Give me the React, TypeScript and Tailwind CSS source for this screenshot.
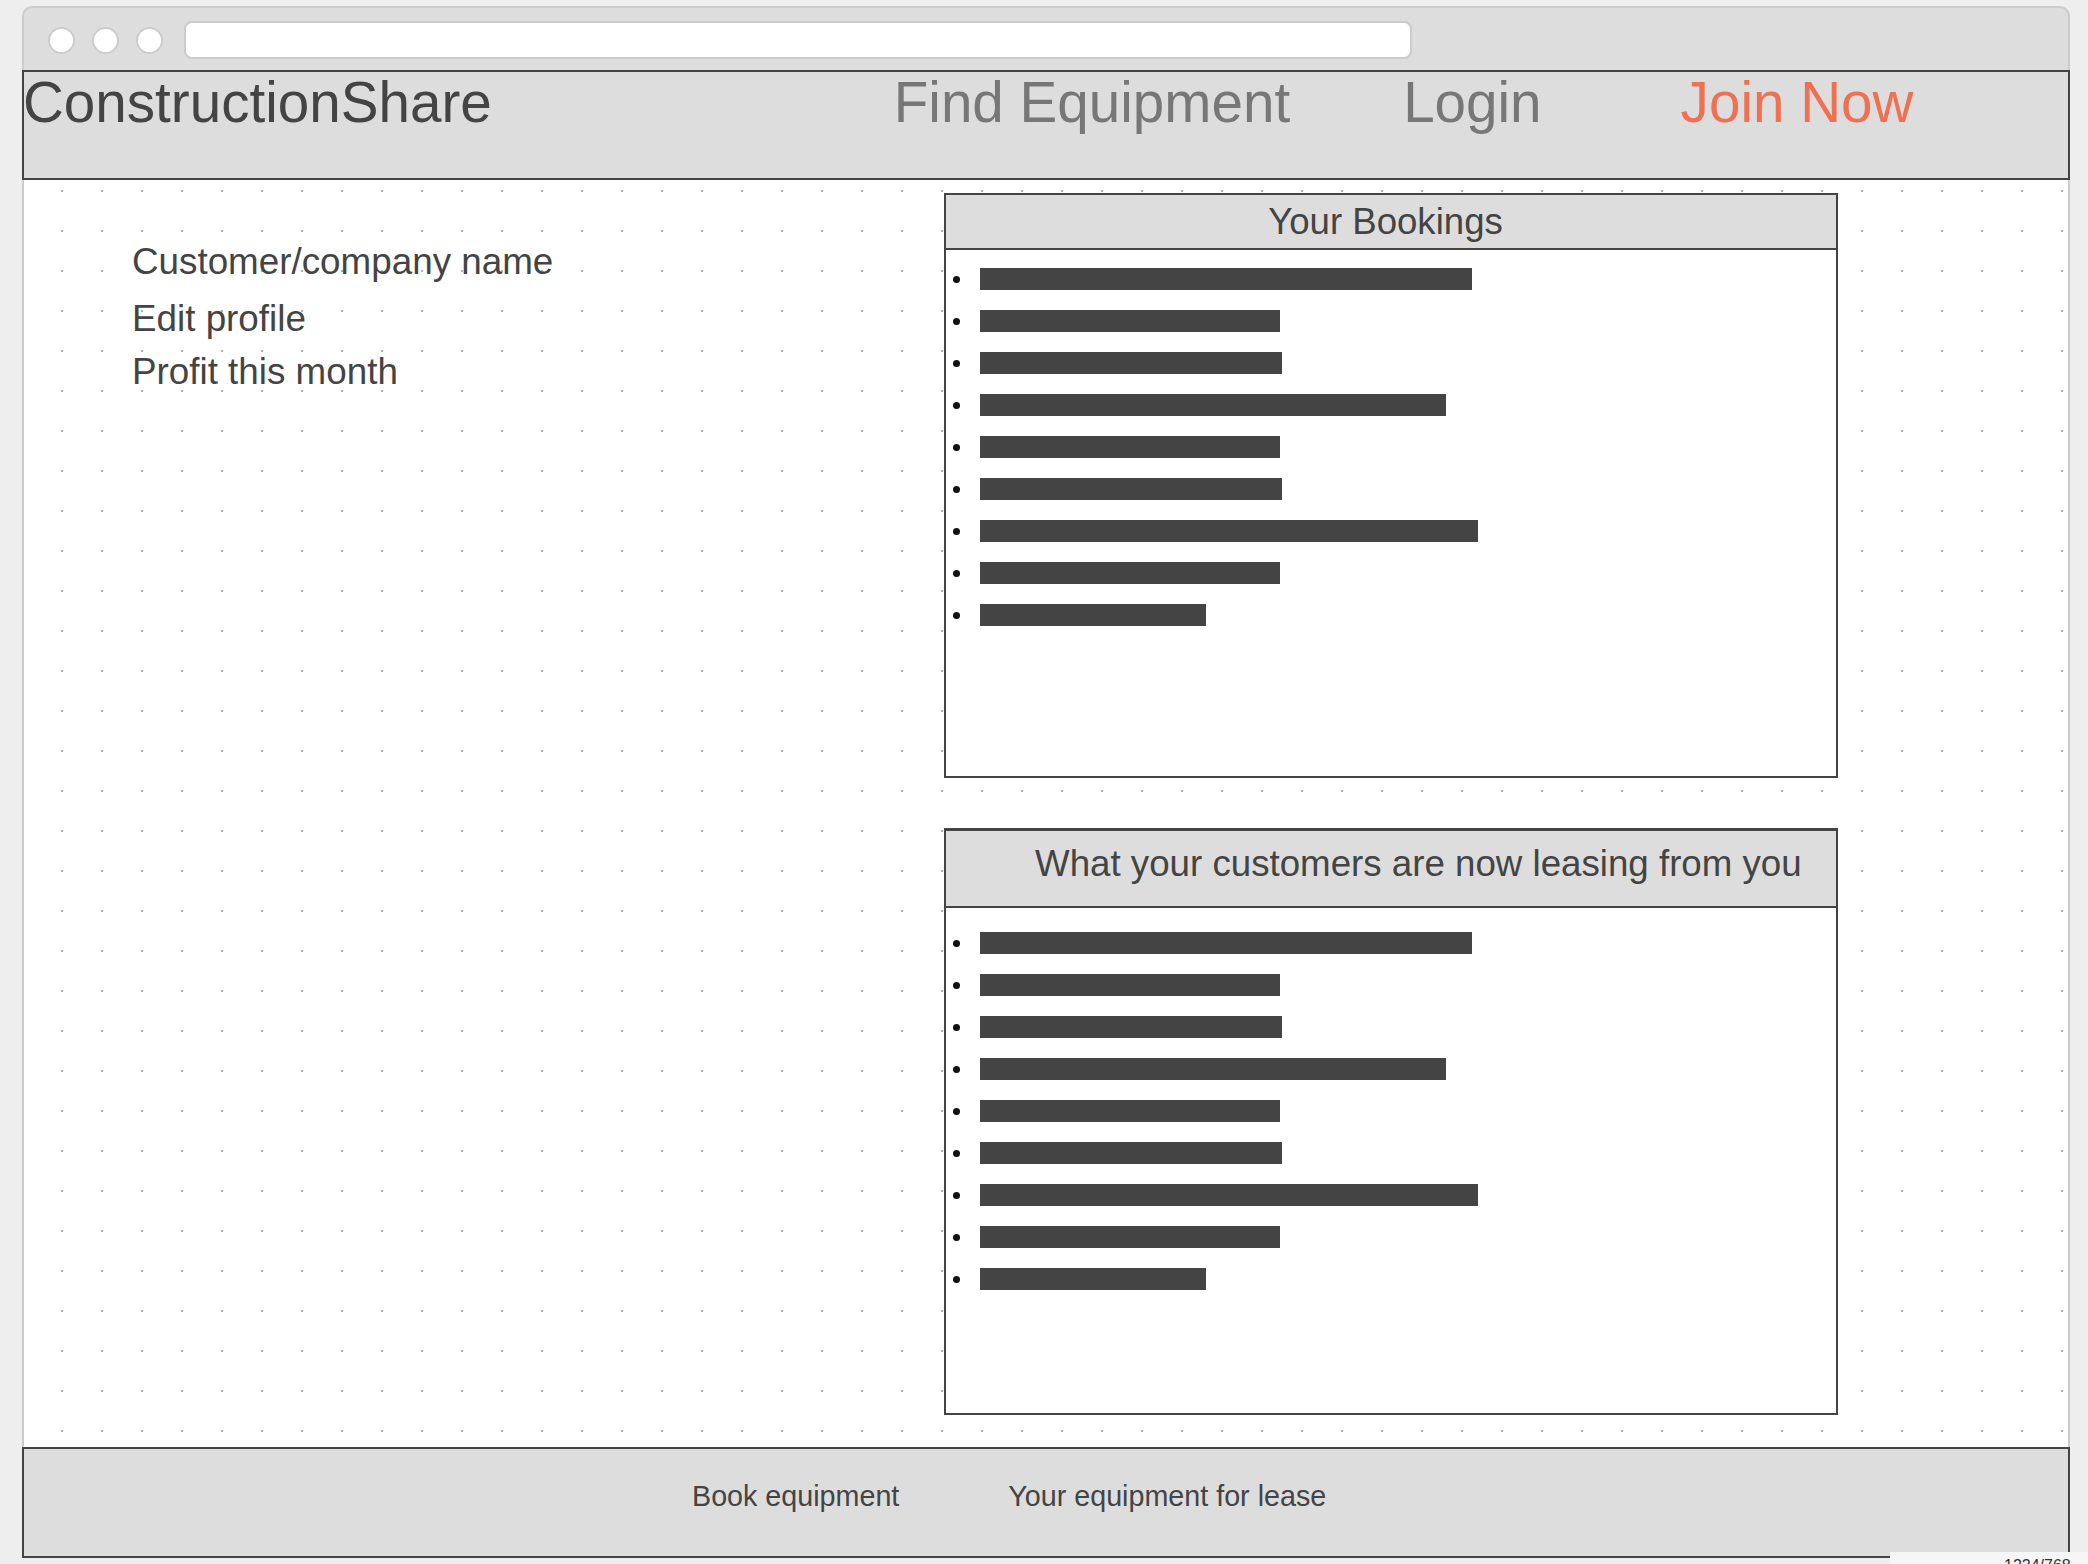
import React from "react";

const BAR_WIDTHS = [
  "w-[492px]",
  "w-[300px]",
  "w-[302px]",
  "w-[466px]",
  "w-[300px]",
  "w-[302px]",
  "w-[498px]",
  "w-[300px]",
  "w-[226px]",
];

function BarList({ className }: { className: string }) {
  return (
    <ul className={className}>
      {BAR_WIDTHS.map((w, i) => (
        <li key={i} className="flex h-[42px] items-center pl-[7px]">
          <span className="h-[7px] w-[7px] rounded-full bg-[#111]" />
          <span className={`ml-[20px] h-[22px] bg-[#444444] ${w}`} />
        </li>
      ))}
    </ul>
  );
}

export default function App() {
  return (
    <div className="relative h-[1564px] w-[2088px] overflow-hidden bg-[#eeeeee] pl-[22px] pt-[6px] font-['Liberation_Sans',Arial,sans-serif] text-[#444444]">
      <div className="flex w-[2048px] flex-col">
        {/* browser chrome */}
        <div className="flex h-[64px] items-center gap-[17px] rounded-t-[10px] border-x-2 border-t-2 border-[#cccccc] bg-[#dddddd] pl-[24px] pt-[2px]">
          <span className="h-[27px] w-[27px] rounded-full border-2 border-[#cccccc] bg-white" />
          <span className="h-[27px] w-[27px] rounded-full border-2 border-[#cccccc] bg-white" />
          <span className="h-[27px] w-[27px] rounded-full border-2 border-[#cccccc] bg-white" />
          <div className="ml-[4px] h-[38px] w-[1228px] rounded-[8px] border-2 border-[#cccccc] bg-white" />
        </div>

        {/* header */}
        <header className="flex h-[110px] items-start border-2 border-[#444444] bg-[#dddddd] pt-[3px] text-[56.6px] leading-none">
          <span className="-ml-[1px] text-[#444444]">ConstructionShare</span>
          <nav className="flex">
            <a className="ml-[402px] text-[#777777]">Find Equipment</a>
            <a className="ml-[113px] text-[#777777]">Login</a>
            <a className="ml-[139px] text-[#f07052]">Join Now</a>
          </nav>
        </header>

        {/* content */}
        <main className="flex h-[1267px] border-x-2 border-[#cccccc] bg-white bg-[radial-gradient(circle,#b0b0b0_1.1px,transparent_1.6px)] bg-[size:40px_40px] bg-[position:18px_-9px]">
          <div className="flex w-[920px] flex-col items-start pl-[108px] pt-[64px] text-[36.8px] leading-none">
            <p>Customer/company name</p>
            <p className="mt-[20px]">Edit profile</p>
            <p className="mt-[16px]">Profit this month</p>
          </div>

          <div className="flex w-[894px] flex-col pt-[13px]">
            <section className="flex h-[585px] flex-col border-2 border-[#444444] bg-white">
              <div className="flex h-[55px] items-center justify-center border-b-2 border-[#444444] bg-[#dddddd] pr-[11px] pt-[2px]">
                <h2 className="text-[36.6px] leading-none text-[#444444]">Your Bookings</h2>
              </div>
              <BarList className="pt-[8px]" />
            </section>

            <section className="mt-[50px] flex h-[587px] flex-col border-x-2 border-b-2 border-t-[3px] border-[#444444] bg-white">
              <div className="h-[77px] border-b-2 border-[#444444] bg-[#dddddd] pl-[89px] pt-[15px] text-left">
                <h2 className="whitespace-nowrap text-[36.7px] leading-none text-[#444444]">
                  What your customers are now leasing from you
                </h2>
              </div>
              <BarList className="pt-[14px]" />
            </section>
          </div>
        </main>

        {/* footer */}
        <footer className="flex h-[111px] items-start border-2 border-[#444444] bg-[#dddddd] pl-[668px] pt-[33px] text-[28.7px] leading-none text-[#444444]">
          <a>Book equipment</a>
          <a className="ml-[109px]">Your equipment for lease</a>
        </footer>
      </div>

      <div className="absolute left-[1890px] top-[1552px] h-[40px] w-[198px] bg-[#f6f6f6] pl-[114px] pt-[6px] text-[16px] leading-none text-[#333333]">
        1224/768
      </div>
    </div>
  );
}
